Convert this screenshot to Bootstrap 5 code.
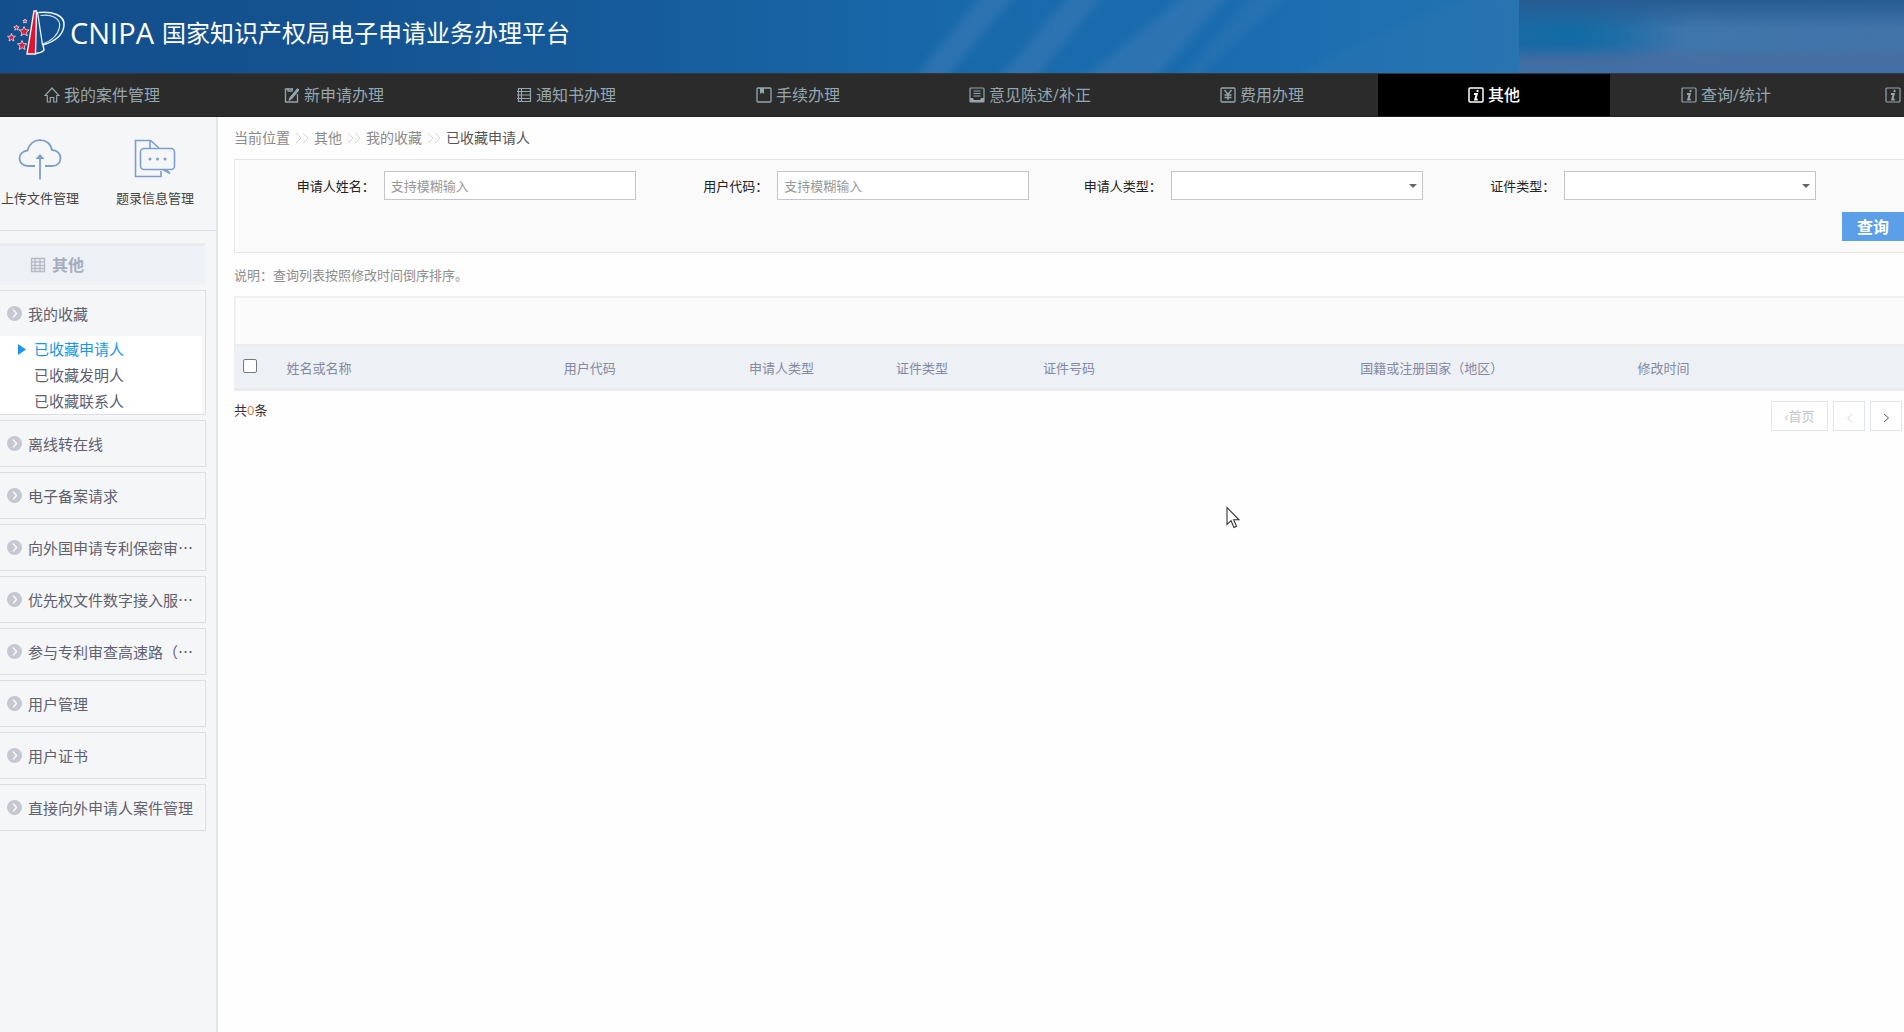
<!DOCTYPE html>
<html lang="zh-CN">
<head>
<meta charset="utf-8">
<meta name="viewport" content="width=device-width, initial-scale=1">
<title>CNIPA 国家知识产权局电子申请业务办理平台</title>
<link href="https://cdn.jsdelivr.net/npm/bootstrap@5.3.0/dist/css/bootstrap.min.css" rel="stylesheet">
<style>
  body { font-family: "Open Sans", "Noto Sans CJK SC", sans-serif; font-size: 13px; line-height: 20px; color: #333; background: #fefefe; }
  a { text-decoration: none; color: inherit; }
  svg { flex: none; }

  /* banner */
  .site-banner { height: 73px; padding: 0 0 8px 6px; background: linear-gradient(90deg, #134e8d 0%, #14528f 16%, #165c9c 34%, #1869aa 50%, #1b6db0 66%, #2373b0 80%); }
  .site-banner .rays { left: 0; top: 0; }
  .site-banner .user-haze { top: 0; bottom: 0; right: 0; left: 79.8%; background:
      linear-gradient(180deg, #265c92 0%, rgba(38,92,146,0) 40%, rgba(74,108,160,0) 62%, rgba(74,108,160,.8) 84%, #3d70a8 100%),
      radial-gradient(ellipse 110px 50px at 50px 34px, #126aa4 0%, rgba(18,106,164,0) 100%),
      linear-gradient(90deg, #1f6ba6 0%, #3f76ab 45%, #4273a9 100%); }
  .brand-latin { font-size: 29px; line-height: 40px; }
  .brand-name { font-size: 24px; line-height: 40px; font-weight: 400; }

  /* main navigation */
  .main-nav { height: 44px; background: #2b2b2b; border-top: 1px solid #33383d; border-bottom: 1px solid #222; margin-left: -14px; }
  .main-nav .nav-link { flex: 0 0 232px; padding: 0; gap: 4px; color: #94a6ae; font-size: 16px; line-height: 20px; }
  .main-nav .nav-link.active { background: #000; color: #fff; font-weight: 500; }
  .main-nav .nav-more { flex: 1 1 0; min-width: 0; padding-left: 43px; }

  /* sidebar */
  .side { flex: 0 0 218px; background: #f5f6f7; border-right: 2px solid #e2e4e6; }
  .quick { height: 114px; padding-top: 22px; border-bottom: 1px solid #dadde2; }
  .quick a { gap: 8px; color: #444; }
  .quick-first { width: 80px; }
  .quick-second { width: 82px; margin-left: 34px; }
  .side-title { height: 42px; margin: 12px 10px 5px 0; padding: 2px 0 0 30px; gap: 6px; background: #edf0f4; border: 3px solid #f0f2f4; border-left: 0; border-top-color: #e9ebee; color: #a6adbe; font-size: 16px; font-weight: 700; }
  .menu-block { margin: 0 10px 5px 0; border: 1px solid #dcdee3; border-left: 0; box-shadow: inset -3px 0 #f8f8fa; }
  .menu-head { height: 45px; padding-left: 7px; gap: 6px; font-size: 15px; color: #60606f; white-space: nowrap; }
  .menu-sub { background: #fff; padding-left: 18px; margin-right: 3px; }
  .menu-sub a { height: 26px; gap: 8px; font-size: 15px; color: #60606f; }
  .menu-sub a.current { color: #1a96ee; }
  .menu-sub .arrow-slot { width: 8px; }

  /* content */
  .content { padding-left: 16px; min-width: 0; }
  .crumbs { height: 42px; font-size: 14px; color: #8b8b8b; gap: 5px; }
  .crumbs .here { color: #555; }
  .panel-box { background: #fafafa; border: solid #e4e6e8; border-width: 1px 0 1px 1px; box-shadow: inset 3px 0 #fcfcfc; }
  .search-box { height: 94px; padding: 11px 0 0 7px; }
  .search-fields { padding-right: 88px; }
  .search-fields .field { flex: 1 1 0; gap: 9px; }
  .search-fields label { flex: 1 1 0; text-align: right; color: #222; white-space: nowrap; }
  .search-fields .form-control, .search-fields .form-select { flex: 0 0 64%; height: 29px; min-height: 0; padding: 0 6px; font-size: 13px; line-height: 20px; border: 1px solid #c3c5c9; border-radius: 0; background-color: #fff; }
  .search-fields .form-control::placeholder { color: #999; }
  .search-fields .form-select { background-image: url("data:image/svg+xml,%3Csvg xmlns='http://www.w3.org/2000/svg' viewBox='0 0 8 5'%3E%3Cpath d='M0 1h8L4 5z' fill='%23666'/%3E%3C/svg%3E"); background-size: 8px 5px; background-position: right 5px center; }
  .btn-query { width: 62px; height: 29px; margin-top: 12px; padding: 0; border: 0; border-radius: 0; background: #5b9fe8; color: #fff; font-size: 16px; line-height: 20px; font-weight: 700; }
  .hint { height: 43px; color: #8d8d8d; }
  .tool-strip { height: 48px; border-width: 2px 0 0 2px; border-color: #f0f0f1; }
  .list-table { table-layout: fixed; margin: 0; border-top: 1px solid #dadbde; }
  .list-table th { height: 44px; padding: 0 0 0 9px; vertical-align: middle; font-weight: 400; color: #8389a2; background: #edf0f4; border-top: 3px solid #ededef; border-bottom: 3px solid #ebebed; }
  .list-table .form-check-input { display: block; width: 14px; height: 14px; margin: 0 0 4px; border: 1px solid #777; border-radius: 2px; }
  .list-foot { padding-top: 10px; }
  .list-foot .total { color: #333; line-height: 18px; }
  .list-foot .num { color: #dd7a45; }
  .pager { gap: 5px; padding-right: 2px; }
  .pager .btn { height: 30px; width: 32px; padding: 0; border: 1px solid #e3e6e8; border-radius: 0; background: #fff; color: #c3c5c8; font-size: 13px; line-height: 20px; opacity: 1; }
  .pager .btn-first { width: 57px; }
  .pager .btn-next { color: #555; }
  .pointer { left: 1226px; top: 506px; pointer-events: none; }
</style>
<script src="https://cdn.jsdelivr.net/npm/bootstrap@5.3.0/dist/js/bootstrap.bundle.min.js"></script>
</head>
<body class="d-flex flex-column min-vh-100">

<header class="site-banner position-relative d-flex align-items-center text-white">
  <svg class="rays position-absolute w-100 h-100" viewBox="0 0 1904 73" preserveAspectRatio="none" aria-hidden="true">
    <defs><filter id="soft" x="-5%" y="-20%" width="110%" height="140%"><feGaussianBlur stdDeviation="4"/></filter></defs>
    <g fill="#3c7ab6" opacity=".55" filter="url(#soft)">
      <path d="M984-8h34L944 81h-32z"/>
      <path d="M1072-8h34L1034 81h-38z"/>
      <path d="M1190-8h40L1152 81h-72z"/>
      <path d="M1256-8h34L1192 81h-12z" opacity=".6"/>
      <path d="M1480-8h60v89H1285L1370 38z" opacity=".35"/>
    </g>
  </svg>
  <div class="user-haze position-absolute"></div>
  <a href="#" class="position-relative d-flex align-items-center">
    <svg width="60" height="48" viewBox="6 8 60 48" aria-hidden="true" fill="none">
      <path d="M38.500 11.500C52 10 65 14 64 24.500C63 35 53 41 43 44L44 49Q41 52.500 34 52.500" stroke="#e8f4ff" stroke-width="1.500"/>
      <path d="M40.500 14.500C51 13 61 17 59.500 26C58 34 51 40 42.500 43" stroke="#cfe4f7" stroke-width="1.200"/>
      <path d="M37.500 11L42.500 44" stroke="#e8f4ff" stroke-width="1.300"/>
      <path d="M34 10h2.500L35.500 53h-8.500z" fill="#e0142c" stroke="#f3f6ff" stroke-width="1.400"/>
      <g fill="#dc1c34" stroke="#f3dfe9" stroke-width=".8">
        <path d="M24 25.500l1.500 3.200 3.600.200-2.700 2.400.9 3.500-3.200-1.900-3.100 1.900.9-3.500-2.800-2.400 3.600-.200z"/>
        <path d="M22 39.500l1.400 3.100 3.400.200-2.600 2.300.9 3.400-3-1.800-2.900 1.800.8-3.400-2.600-2.300 3.400-.200z"/>
        <path d="M11.500 32.500l1.100 2.600 2.800.200-2.200 1.900.7 2.800-2.400-1.500-2.500 1.500.7-2.800-2.200-1.900 2.900-.200z"/>
        <path d="M16.500 24l.7 1.800 2 .1-1.600 1.300.6 2-1.700-1.100-1.700 1.100.5-2-1.500-1.300 2-.1z"/>
        <path d="M25 18l.6 1.400 1.500.1-1.200 1 .4 1.500-1.300-.800-1.400.800.4-1.500-1.100-1 1.500-.1z"/>
      </g>
    </svg>
    <span class="brand-latin ms-1">CNIPA</span>
    <span class="brand-name ms-2">国家知识产权局电子申请业务办理平台</span>
  </a>
</header>

<nav class="main-nav nav flex-nowrap">
  <a class="nav-link d-flex align-items-center justify-content-center" href="#">
    <svg width="16" height="16" viewBox="0 0 16 16" fill="none" stroke="currentColor" stroke-width="1.200"><path d="M8 1L1 8.500h2.300V15h3v-4.500h3.400V15h3V8.500H15z"/></svg>我的案件管理</a>
  <a class="nav-link d-flex align-items-center justify-content-center" href="#">
    <svg width="16" height="16" viewBox="0 0 16 16" fill="none" stroke="currentColor" stroke-width="1.300"><path d="M9 2H1.500v13h12V7M4 1v3h4V1"/><path d="M13.500 1.500L6 10.500l-1 3L7.500 12 15 3z" fill="currentColor" stroke-width="1"/></svg>新申请办理</a>
  <a class="nav-link d-flex align-items-center justify-content-center" href="#">
    <svg width="16" height="16" viewBox="0 0 16 16" fill="none" stroke="currentColor" stroke-width="1.200"><path d="M2.500 1.500h12v13h-12zM5.500 1.500v13M1 4.500h13.500M1 8h13.500M1 11.500h13.500"/></svg>通知书办理</a>
  <a class="nav-link d-flex align-items-center justify-content-center" href="#">
    <svg width="16" height="16" viewBox="0 0 16 16" fill="none" stroke="currentColor" stroke-width="1.300"><rect x="1" y="1" width="14" height="14" rx="1"/><path d="M4 1v6l2-1.500 2 1.500V1z" fill="currentColor" stroke="none"/></svg>手续办理</a>
  <a class="nav-link d-flex align-items-center justify-content-center" href="#">
    <svg width="16" height="16" viewBox="0 0 16 16" fill="none" stroke="currentColor" stroke-width="1.200"><rect x="1" y="1" width="14" height="14" rx="1"/><path d="M4.500 4h7M4.500 6.500h7M4.500 9h7"/><path d="M1 11h3l1 2h6l1-2h3v4H1z" fill="currentColor" stroke="none"/></svg>意见陈述/补正</a>
  <a class="nav-link d-flex align-items-center justify-content-center" href="#">
    <svg width="16" height="16" viewBox="0 0 16 16" fill="none" stroke="currentColor" stroke-width="1.300"><rect x="1" y="1" width="14" height="14" rx="1"/><path d="M4.500 3L8 7.500 11.500 3M8 7.500V13M4.500 8h7M4.500 10.500h7"/></svg>费用办理</a>
  <a class="nav-link active d-flex align-items-center justify-content-center" href="#" aria-current="page">
    <svg width="16" height="16" viewBox="0 0 16 16" fill="none" stroke="currentColor" stroke-width="1.500"><rect x="1" y="1" width="14" height="14" rx="1"/><path d="M9.800 3l-.5 2M6 7h2.800L7.200 12.500h2.500" stroke-width="2"/></svg>其他</a>
  <a class="nav-link d-flex align-items-center justify-content-center" href="#">
    <svg width="16" height="16" viewBox="0 0 16 16" fill="none" stroke="currentColor" stroke-width="1.200"><rect x="1" y="1" width="14" height="14" rx="1"/><path d="M9.800 3l-.5 2M6 7h2.800L7.200 12.500h2.500" stroke-width="2"/></svg>查询/统计</a>
  <a class="nav-link nav-more d-flex align-items-center" href="#" aria-label="更多">
    <svg width="16" height="16" viewBox="0 0 16 16" fill="none" stroke="currentColor" stroke-width="1.200"><rect x="1" y="1" width="14" height="14" rx="1"/><path d="M9.800 3l-.5 2M6 7h2.800L7.200 12.500h2.500" stroke-width="2"/></svg></a>
</nav>

<svg class="d-none" aria-hidden="true">
  <symbol id="dot" viewBox="0 0 15 15"><circle cx="7.500" cy="7.500" r="7.500" fill="#c5c7d1"/><path d="M6 3.500l3.500 4-3.500 4" fill="none" stroke="#f6f6fa" stroke-width="1.600"/></symbol>
</svg>

<div class="d-flex flex-grow-1">
  <aside class="side">
    <div class="quick d-flex">
      <a href="#" class="quick-first d-flex flex-column align-items-center text-nowrap">
        <svg width="44" height="41" viewBox="0 0 44 41" fill="none" stroke="#7d9fcf" stroke-width="1.800"><path d="M17 27H10C5 27 1.500 23.500 1.500 19.500 1.500 15 5 12 9.500 11.500 11 5 16 1 22 1.200 28 1 33 5 34 11 39 11 42.500 14.500 42.500 19 42.500 24 39 27 34 27H27"/><path d="M22 40.500V17"/><path d="M17.500 20L22 15l4.500 5z" fill="#7d9fcf" stroke="none"/></svg>
        上传文件管理</a>
      <a href="#" class="quick-second d-flex flex-column align-items-center text-nowrap">
        <svg width="42" height="41" viewBox="0 0 42 41" fill="none" stroke="#7d9fcf" stroke-width="1.600"><path d="M25 9L16.500 1.500H1.500v36H27V32M16 1.500V9"/><rect x="6.500" y="9.500" width="34" height="21" rx="3.500"/><path d="M29 30.500l7 4-4-4"/><g fill="#7d9fcf" stroke="none"><circle cx="16" cy="20" r="1.500"/><circle cx="23.500" cy="20" r="1.500"/><circle cx="31" cy="20" r="1.500"/></g></svg>
        题录信息管理</a>
    </div>

    <div class="side-title d-flex align-items-center">
      <svg width="16" height="16" viewBox="0 0 16 16" fill="none" stroke="#b4bac9" stroke-width="1.300"><path d="M1.500 1.500h13v13h-13zM5 1.500v13M1 5h13.500M1 8.500h13.500M1 11.500h13.500M10 1.500v13"/></svg>其他</div>

    <div class="menu-block">
      <a href="#" class="menu-head d-flex align-items-center"><svg width="15" height="15"><use href="#dot"/></svg>我的收藏</a>
      <div class="menu-sub">
        <a href="#" class="current d-flex align-items-center"><svg class="arrow-slot" width="8" height="11" viewBox="0 0 8 11"><path d="M0 0l8 5.500L0 11z" fill="#1a96ee"/></svg>已收藏申请人</a>
        <a href="#" class="d-flex align-items-center"><span class="arrow-slot"></span>已收藏发明人</a>
        <a href="#" class="d-flex align-items-center"><span class="arrow-slot"></span>已收藏联系人</a>
      </div>
    </div>
    <div class="menu-block"><a href="#" class="menu-head d-flex align-items-center"><svg width="15" height="15"><use href="#dot"/></svg>离线转在线</a></div>
    <div class="menu-block"><a href="#" class="menu-head d-flex align-items-center"><svg width="15" height="15"><use href="#dot"/></svg>电子备案请求</a></div>
    <div class="menu-block"><a href="#" class="menu-head d-flex align-items-center"><svg width="15" height="15"><use href="#dot"/></svg>向外国申请专利保密审⋯</a></div>
    <div class="menu-block"><a href="#" class="menu-head d-flex align-items-center"><svg width="15" height="15"><use href="#dot"/></svg>优先权文件数字接入服⋯</a></div>
    <div class="menu-block"><a href="#" class="menu-head d-flex align-items-center"><svg width="15" height="15"><use href="#dot"/></svg>参与专利审查高速路（⋯</a></div>
    <div class="menu-block"><a href="#" class="menu-head d-flex align-items-center"><svg width="15" height="15"><use href="#dot"/></svg>用户管理</a></div>
    <div class="menu-block"><a href="#" class="menu-head d-flex align-items-center"><svg width="15" height="15"><use href="#dot"/></svg>用户证书</a></div>
    <div class="menu-block"><a href="#" class="menu-head d-flex align-items-center"><svg width="15" height="15"><use href="#dot"/></svg>直接向外申请人案件管理</a></div>
  </aside>

  <main class="content flex-grow-1">
    <div class="crumbs d-flex align-items-center">
      <span>当前位置</span>
      <svg width="14" height="12" viewBox="0 0 14 12" fill="none" stroke="#d5d5d8"><path d="M1 1l5 5-5 5M8 1l5 5-5 5"/></svg>
      <a href="#">其他</a>
      <svg width="14" height="12" viewBox="0 0 14 12" fill="none" stroke="#d5d5d8"><path d="M1 1l5 5-5 5M8 1l5 5-5 5"/></svg>
      <a href="#">我的收藏</a>
      <svg width="14" height="12" viewBox="0 0 14 12" fill="none" stroke="#d5d5d8"><path d="M1 1l5 5-5 5M8 1l5 5-5 5"/></svg>
      <span class="here">已收藏申请人</span>
    </div>

    <form class="panel-box search-box">
      <div class="search-fields d-flex">
        <div class="field d-flex align-items-center"><label for="f-name">申请人姓名：</label><input id="f-name" class="form-control" type="text" placeholder="支持模糊输入"></div>
        <div class="field d-flex align-items-center"><label for="f-code">用户代码：</label><input id="f-code" class="form-control" type="text" placeholder="支持模糊输入"></div>
        <div class="field d-flex align-items-center"><label for="f-kind">申请人类型：</label><select id="f-kind" class="form-select"><option></option></select></div>
        <div class="field d-flex align-items-center"><label for="f-cert">证件类型：</label><select id="f-cert" class="form-select"><option></option></select></div>
      </div>
      <div class="d-flex justify-content-end"><button type="button" class="btn btn-query">查询</button></div>
    </form>

    <div class="hint d-flex align-items-center">说明：查询列表按照修改时间倒序排序。</div>

    <div class="panel-box tool-strip"></div>
    <table class="table list-table">
      <colgroup><col style="width:2.6%"><col style="width:16.6%"><col style="width:11.1%"><col style="width:8.8%"><col style="width:8.8%"><col style="width:19%"><col style="width:16.6%"><col></colgroup>
      <thead><tr>
        <th><input class="form-check-input" type="checkbox" aria-label="全选"></th>
        <th>姓名或名称</th><th>用户代码</th><th>申请人类型</th><th>证件类型</th><th>证件号码</th><th>国籍或注册国家（地区）</th><th>修改时间</th>
      </tr></thead>
    </table>
    <div class="list-foot d-flex justify-content-between">
      <div class="total">共<span class="num">0</span>条</div>
      <div class="pager d-flex">
        <button type="button" class="btn btn-first" disabled>‹首页</button>
        <button type="button" class="btn" disabled aria-label="上一页"><svg width="7" height="10" viewBox="0 0 7 10" fill="none" stroke="#d5d7da"><path d="M6 1L1.500 5 6 9"/></svg></button>
        <button type="button" class="btn btn-next" aria-label="下一页"><svg width="7" height="10" viewBox="0 0 7 10" fill="none" stroke="#555"><path d="M1 1l4.500 4L1 9"/></svg></button>
      </div>
    </div>
  </main>
</div>

<svg class="pointer position-absolute" width="14" height="23" viewBox="0 0 14 23" aria-hidden="true"><path d="M1 1.500v17l4-3.800 3 6.800 2.600-1.200-3-6.500H13z" fill="#fff" stroke="#333" stroke-width="1.100"/></svg>

</body>
</html>
